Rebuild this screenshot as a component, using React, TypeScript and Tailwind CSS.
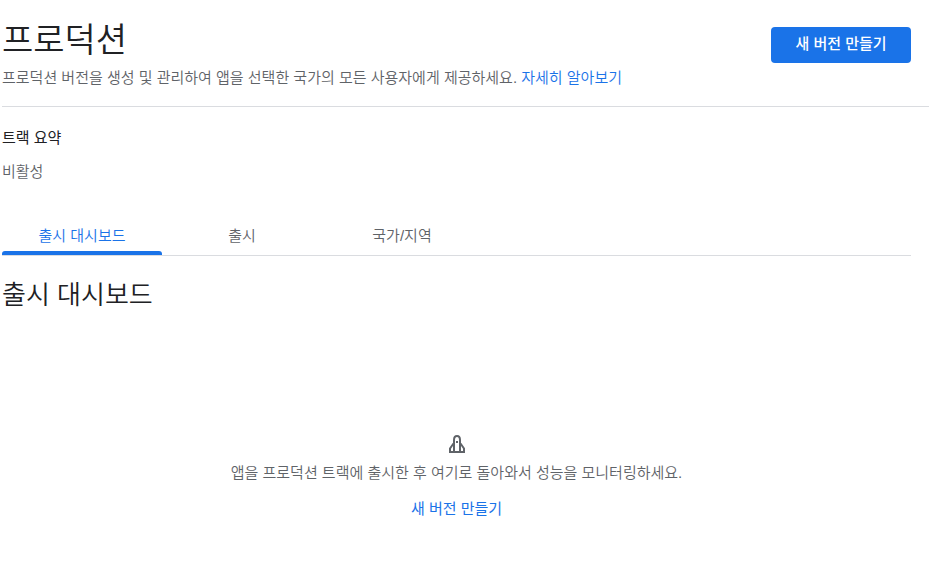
const tabs = [
  { label: "출시 대시보드", active: true },
  { label: "출시", active: false },
  { label: "국가/지역", active: false },
];

const RocketIcon = () => (
  <svg width="16" height="18" viewBox="0 0 16 18" fill="none" stroke="#5f6368" strokeWidth="2" aria-hidden="true">
    <path d="M5 17V5C5 2.500 6.500 1 8 1s3 1.500 3 4v12" />
    <path d="M4.500 8.500L1 13.500V17h14v-3.500L11.500 8.500" />
    <path d="M7 6h2v2H7z" fill="#5f6368" stroke="none" />
  </svg>
);

const PageHeader = () => (
  <header className="flex items-start justify-between border-b border-[#dadce0] pt-4 pr-[18px] pb-[17px]">
    <div>
      <h1 className="text-[34px] leading-[48px] font-[350] text-[#202124]">프로덕션</h1>
      <p className="mt-[3px] text-[15px] leading-[22px] font-[350] text-[#5f6368]">
        프로덕션 버전을 생성 및 관리하여 앱을 선택한 국가의 모든 사용자에게 제공하세요.{" "}
        <a href="#learn-more" className="text-[#1a73e8]">
          자세히 알아보기
        </a>
      </p>
    </div>
    <button type="button" className="mt-[11px] h-9 min-w-[140px] rounded bg-[#1a73e8] px-6 pb-0.5 text-[15px] leading-5 font-medium text-white">
      새 버전 만들기
    </button>
  </header>
);

const TrackSummary = () => (
  <section className="pt-5 text-[15px] leading-[22px]">
    <h2 className="text-[#202124]">트랙 요약</h2>
    <p className="mt-3 font-[350] text-[#5f6368]">비활성</p>
  </section>
);

const Tabs = () => (
  <div role="tablist" className="mt-6 mr-[18px] flex border-b border-[#dadce0]">
    {tabs.map((tab) => (
      <button
        key={tab.label}
        type="button"
        role="tab"
        aria-selected={tab.active}
        className={
          tab.active
            ? "flex h-12 w-40 flex-col items-center justify-end text-[15px] font-[350] text-[#1a73e8]"
            : "flex h-12 w-40 flex-col items-center justify-end text-[15px] font-[350] text-[#5f6368]"
        }
      >
        <span className="mb-1 leading-[22px]">{tab.label}</span>
        <span className={tab.active ? "h-1 w-full rounded-t-[3px] bg-[#1a73e8]" : "h-1 w-full"} />
      </button>
    ))}
  </div>
);

const EmptyState = () => (
  <div className="mt-[122px] mr-[18px] flex flex-col items-center text-[15px] leading-[22px]">
    <RocketIcon />
    <p className="mt-[9px] font-[350] text-[#5f6368]">앱을 프로덕션 트랙에 출시한 후 여기로 돌아와서 성능을 모니터링하세요.</p>
    <button type="button" className="mt-[14px] text-[#1a73e8]">
      새 버전 만들기
    </button>
  </div>
);

const App = () => {
  return (
    <main className="min-h-screen bg-white pl-0.5 font-['Liberation_Sans','Noto_Sans_CJK_KR',sans-serif]">
      <PageHeader />
      <TrackSummary />
      <Tabs />
      <section>
        <h2 className="mt-[21px] text-[26px] leading-9 font-[350] text-[#202124]">출시 대시보드</h2>
        <EmptyState />
      </section>
    </main>
  );
};

export default App;
